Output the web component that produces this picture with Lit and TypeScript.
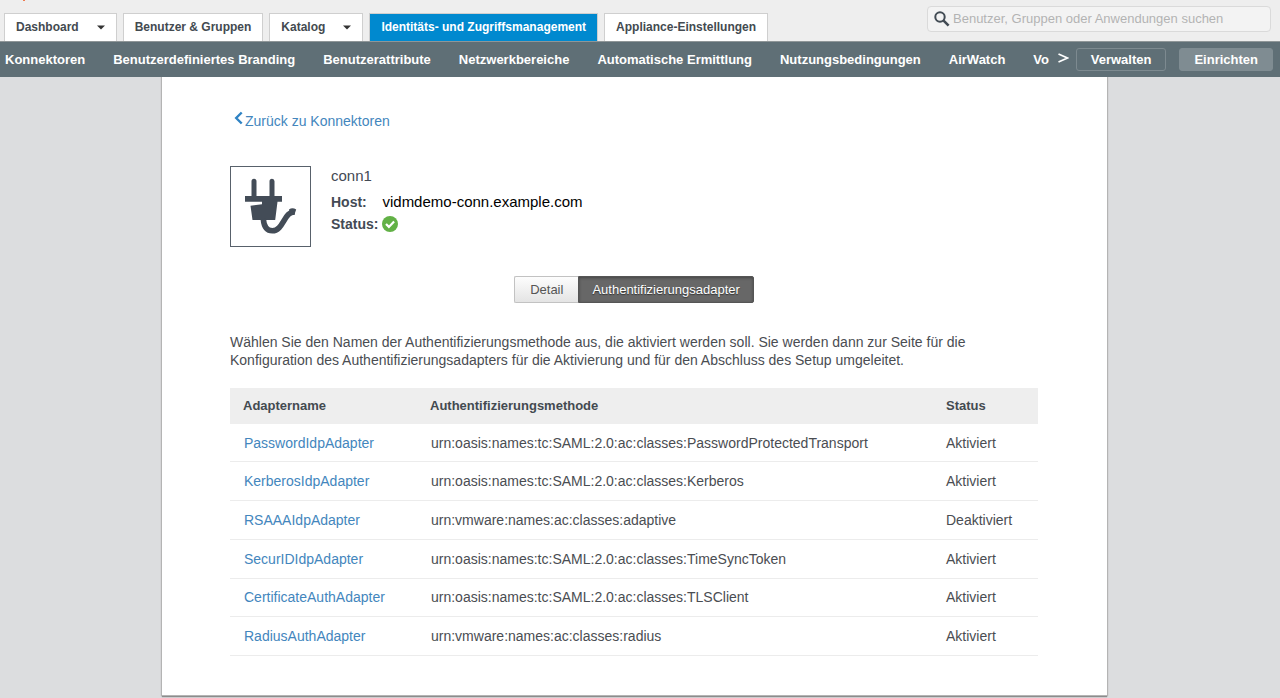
import { LitElement, html, css } from "lit";
import { customElement, state } from "lit/decorators.js";
import { classMap } from "lit/directives/class-map.js";

interface Tab {
  label: string;
  menu?: boolean;
  active?: boolean;
}

interface Adapter {
  name: string;
  method: string;
  status: string;
}

const TABS: Tab[] = [
  { label: "Dashboard", menu: true },
  { label: "Benutzer & Gruppen" },
  { label: "Katalog", menu: true },
  { label: "Identitäts- und Zugriffsmanagement", active: true },
  { label: "Appliance-Einstellungen" },
];

const SECTIONS = [
  "Konnektoren",
  "Benutzerdefiniertes Branding",
  "Benutzerattribute",
  "Netzwerkbereiche",
  "Automatische Ermittlung",
  "Nutzungsbedingungen",
  "AirWatch",
  "Vo",
];

const ADAPTERS: Adapter[] = [
  { name: "PasswordIdpAdapter", method: "urn:oasis:names:tc:SAML:2.0:ac:classes:PasswordProtectedTransport", status: "Aktiviert" },
  { name: "KerberosIdpAdapter", method: "urn:oasis:names:tc:SAML:2.0:ac:classes:Kerberos", status: "Aktiviert" },
  { name: "RSAAAIdpAdapter", method: "urn:vmware:names:ac:classes:adaptive", status: "Deaktiviert" },
  { name: "SecurIDIdpAdapter", method: "urn:oasis:names:tc:SAML:2.0:ac:classes:TimeSyncToken", status: "Aktiviert" },
  { name: "CertificateAuthAdapter", method: "urn:oasis:names:tc:SAML:2.0:ac:classes:TLSClient", status: "Aktiviert" },
  { name: "RadiusAuthAdapter", method: "urn:vmware:names:ac:classes:radius", status: "Aktiviert" },
];

@customElement("app-header")
export class AppHeader extends LitElement {
  static styles = css`
    :host {
      display: block;
      position: relative;
      background: #eeeeee;
    }
    .logo {
      position: absolute;
      top: 0;
      left: 22px;
    }
    .bar {
      display: flex;
      justify-content: space-between;
      align-items: flex-end;
      gap: 16px;
      padding: 6px 9px 0 4px;
      border-bottom: 1px solid #8f9698;
    }
    .tabs {
      display: flex;
      gap: 6px;
      margin-top: 7px;
    }
    .tab {
      display: flex;
      align-items: center;
      box-sizing: border-box;
      height: 28px;
      padding: 0 11px;
      border: 1px solid #cfcfcf;
      border-bottom: 0;
      background: #ffffff;
      color: #434a50;
      font: bold 12px/27px "Liberation Sans", Arial, sans-serif;
      text-decoration: none;
      white-space: nowrap;
    }
    .active {
      background: #0089cf;
      color: #ffffff;
    }
    .caret {
      margin-left: 18px;
    }
    .search {
      display: flex;
      align-items: center;
      align-self: flex-start;
      box-sizing: border-box;
      width: 344px;
      height: 26px;
      padding: 0 6px;
      gap: 3px;
      border: 1px solid #dadada;
      border-radius: 4px;
      background: #f3f3f3;
    }
    .query {
      flex: 1;
      min-width: 0;
      padding: 0;
      border: 0;
      outline: 0;
      background: transparent;
      color: #434a50;
      font: 13px/20px "Liberation Sans", Arial, sans-serif;
    }
    .query::placeholder {
      color: #b3b3b3;
      opacity: 1;
    }
  `;

  render() {
    return html`
      <svg class="logo" width="4" height="1" viewBox="0 0 4 1" aria-hidden="true">
        <rect x="1" width="2" height="1" fill="#ee7b50" />
      </svg>
      <div class="bar">
        <nav class="tabs">
          ${TABS.map(
            (t) => html`<a href="#" class=${classMap({ tab: true, active: !!t.active })}
              >${t.label}${t.menu
                ? html`<svg class="caret" width="8" height="5" viewBox="0 0 8 5" aria-hidden="true">
                    <path d="M0 .5h8L4 4.5z" fill="#333" />
                  </svg>`
                : null}</a>`
          )}
        </nav>
        <label class="search">
          <svg width="16" height="16" viewBox="0 0 16 16" fill="none" stroke="#424b54" aria-hidden="true">
            <circle cx="6" cy="6" r="4.7" stroke-width="2" />
            <path d="M9.6 9.6l5 5" stroke-width="2.6" />
          </svg>
          <input
            class="query"
            type="text"
            aria-label="Benutzer, Gruppen oder Anwendungen suchen"
            placeholder="Benutzer, Gruppen oder Anwendungen suchen"
          />
        </label>
      </div>
    `;
  }
}

@customElement("section-nav")
export class SectionNav extends LitElement {
  static styles = css`
    :host {
      display: flex;
      align-items: center;
      box-sizing: border-box;
      height: 35px;
      padding: 0 7px 0 5px;
      background: #5f6f76;
      font: bold 13px/20px "Liberation Sans", Arial, sans-serif;
    }
    .sections {
      display: flex;
      flex: 1;
      min-width: 0;
      gap: 28px;
      overflow: hidden;
    }
    .section {
      color: #ffffff;
      text-decoration: none;
      white-space: nowrap;
    }
    .more,
    .mode {
      font: inherit;
      color: #ffffff;
      cursor: pointer;
    }
    .more {
      display: flex;
      align-items: center;
      padding: 0 7px 4px;
      border: 0;
      background: none;
    }
    .modes {
      display: flex;
      gap: 13px;
    }
    .mode {
      height: 23px;
      padding: 0 14px;
      border: 1px solid #7d8a90;
      border-radius: 3px;
      background: transparent;
      line-height: 20px;
    }
    .on {
      border-color: #7f8c92;
      background: #7f8c92;
    }
  `;

  render() {
    return html`
      <nav class="sections">${SECTIONS.map((s) => html`<a class="section" href="#">${s}</a>`)}</nav>
      <button class="more" aria-label="Weitere">
        <svg width="12" height="10" viewBox="0 0 12 10" aria-hidden="true">
          <path d="M1.5 1l9 4-9 4" fill="none" stroke="#fff" stroke-width="1.7" />
        </svg>
      </button>
      <div class="modes">
        <button class="mode">Verwalten</button>
        <button class="mode on">Einrichten</button>
      </div>
    `;
  }
}

@customElement("connector-summary")
export class ConnectorSummary extends LitElement {
  static styles = css`
    :host {
      display: flex;
      gap: 20px;
    }
    .picture {
      display: flex;
      border: 1px solid #58616b;
    }
    .name {
      margin: 0 0 6px;
      color: #434a54;
      font: 15px/19px "Liberation Sans", Arial, sans-serif;
    }
    .facts {
      display: grid;
      grid-template-columns: auto 1fr;
      column-gap: 4px;
      margin: 0;
      font: 14px/22px "Liberation Sans", Arial, sans-serif;
    }
    .term {
      color: #434a54;
      font-weight: bold;
    }
    .value {
      display: flex;
      align-items: center;
      margin: 0;
      color: #000000;
      font-size: 15px;
    }
  `;

  render() {
    return html`
      <div class="picture">
        <svg width="79" height="79" viewBox="0 0 79 79" fill="#434c57" role="img" aria-label="Konnektor">
          <path d="M20.5 32V14.200a2.500 2.500 0 0 1 5 0V32zM38.500 32V14.200a2.500 2.500 0 0 1 5 0V32z" />
          <path d="M14 29h37v5.700h-4.500L44.200 53H21.500L19.500 38.700 31 37.300v-2.600H14z" />
          <path
            d="M32.300 52c.8 8.500 4.200 11.800 9 11.800 11.500 0 11.500-19.800 22.700-18.800"
            fill="none"
            stroke="#434c57"
            stroke-width="5.600"
          />
          <path d="M58 42.500c2.500-1.800 5-1.200 7.200 0l-2 5.500-4-.8z" />
        </svg>
      </div>
      <div>
        <h1 class="name">conn1</h1>
        <dl class="facts">
          <dt class="term">Host:</dt>
          <dd class="value">vidmdemo-conn.example.com</dd>
          <dt class="term">Status:</dt>
          <dd class="value">
            <svg width="16" height="16" viewBox="0 0 16 16" role="img" aria-label="OK">
              <circle cx="8" cy="8" r="8" fill="#62b146" />
              <path d="M4 8l2.900 2.900 5.200-5.400" fill="none" stroke="#fff" stroke-width="2.200" />
            </svg>
          </dd>
        </dl>
      </div>
    `;
  }
}

@customElement("adapter-table")
export class AdapterTable extends LitElement {
  static styles = css`
    :host {
      display: block;
    }
    .table {
      width: 100%;
      height: 268px;
      border-collapse: collapse;
      table-layout: fixed;
      color: #4a4d52;
      font: 14px/20px "Liberation Sans", Arial, sans-serif;
      text-align: left;
    }
    .head {
      height: 36px;
      background: #eeeeee;
    }
    .label {
      padding: 0 13px;
      color: #434a50;
      font-size: 13px;
      font-weight: bold;
    }
    .row {
      border-bottom: 1px solid #ececec;
    }
    .cell {
      padding: 0 14px;
      white-space: nowrap;
    }
    .status {
      padding-left: 13px;
    }
    .first {
      width: 161px;
    }
    .last {
      width: 79px;
    }
    .link {
      color: #4386bd;
      text-decoration: none;
    }
  `;

  render() {
    return html`
      <table class="table">
        <thead>
          <tr class="head">
            <th class="label first">Adaptername</th>
            <th class="label">Authentifizierungsmethode</th>
            <th class="label last">Status</th>
          </tr>
        </thead>
        <tbody>
          ${ADAPTERS.map(
            (a) => html`<tr class="row">
              <td class="cell"><a class="link" href="#">${a.name}</a></td>
              <td class="cell">${a.method}</td>
              <td class="cell status">${a.status}</td>
            </tr>`
          )}
        </tbody>
      </table>
    `;
  }
}

@customElement("app-root")
export class AppRoot extends LitElement {
  static styles = css`
    :host {
      display: flex;
      flex-direction: column;
      min-height: 100vh;
      background: #dcdddf;
      color: #4a4d52;
      font: 14px/18px "Liberation Sans", Arial, sans-serif;
    }
    .stage {
      display: flex;
      flex-direction: column;
      flex: 1;
      padding: 0 11px 3px 0;
    }
    .card {
      flex: 1;
      box-sizing: border-box;
      width: 100%;
      max-width: 945px;
      margin: 0 auto;
      padding: 33px 69px 38px 68px;
      background: #ffffff;
      box-shadow: 0 0 1px 1px #b4b4b4, 0 2px 1px #858585;
      clip-path: inset(0 -4px -4px -4px);
    }
    .back {
      display: inline-flex;
      margin: 0 0 34px 4px;
      gap: 2px;
      color: #4386bd;
      line-height: 22px;
      text-decoration: none;
    }
    .switch {
      display: flex;
      justify-content: center;
      margin: 29px 0 30px;
    }
    .view {
      height: 27px;
      padding: 0 15px;
      border: 1px solid #c2c2c2;
      border-right: 0;
      border-radius: 2px 0 0 2px;
      background: linear-gradient(#fdfdfd, #e4e4e4);
      color: #555555;
      font: 13px/20px "Liberation Sans", Arial, sans-serif;
      cursor: pointer;
    }
    .current {
      padding: 0 13px;
      border: 1px solid #555555;
      border-radius: 0 2px 2px 0;
      background: #676767;
      box-shadow: inset 0 1px 3px #444444;
      color: #ffffff;
      text-shadow: 0 1px 1px #333333;
    }
    .intro {
      margin: 0 0 19px;
    }
  `;

  @state() private view = "Authentifizierungsadapter";

  render() {
    return html`
      <app-header></app-header>
      <section-nav></section-nav>
      <main class="stage">
        <div class="card">
          <a class="back" href="#">
            <svg width="9" height="15" viewBox="0 0 9 15" aria-hidden="true">
              <path d="M7.700 2.500L2.200 8l5.500 5.500" fill="none" stroke="#2f83c4" stroke-width="2.400" />
            </svg>
            <span>Zurück zu Konnektoren</span>
          </a>
          <connector-summary></connector-summary>
          <div class="switch">
            ${["Detail", "Authentifizierungsadapter"].map(
              (v) => html`<button
                class=${classMap({ view: true, current: v === this.view })}
                @click=${() => (this.view = v)}
              >
                ${v}
              </button>`
            )}
          </div>
          <p class="intro">
            Wählen Sie den Namen der Authentifizierungsmethode aus, die aktiviert werden soll. Sie werden dann zur Seite
            für die Konfiguration des Authentifizierungsadapters für die Aktivierung und für den Abschluss des Setup
            umgeleitet.
          </p>
          <adapter-table></adapter-table>
        </div>
      </main>
    `;
  }
}
